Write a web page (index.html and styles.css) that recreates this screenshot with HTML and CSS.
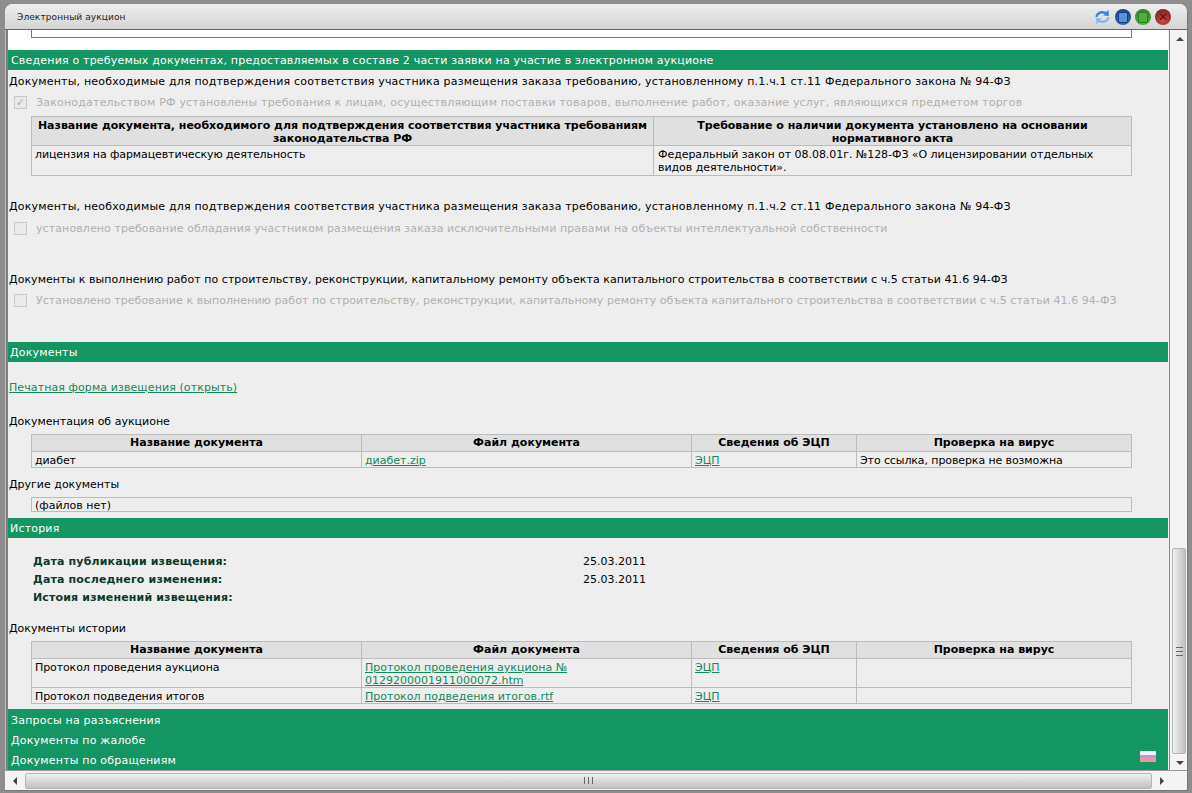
FILE: index.html
```html
<!DOCTYPE html>
<html lang="ru">
  <head>
    <meta charset="UTF-8" />
    <title>Электронный аукцион</title>
    <link rel="stylesheet" href="styles.css">
  </head>
  <body>
    <div class="window">
      <div class="titlebar">
        <span class="title">Электронный аукцион</span>
        <div class="win-buttons">
          <svg class="refresh" width="17" height="16" viewBox="0 0 17 16">
            <path d="M1.5 8 C1.5 3.5 7 0.5 12 3 L14.5 1 L15 7 L9 6.6 L11 5 C7.5 3.6 4.5 5 3.5 8 Z" fill="#3f86d6" />
            <path d="M15.5 8 C15.5 12.5 10 15.5 5 13 L2.5 15 L2 9 L8 9.4 L6 11 C9.5 12.4 12.5 11 13.5 8 Z" fill="#86b8ea" />
          </svg>
          <span class="round blue"><i></i></span>
          <span class="round green"><i></i></span>
          <span class="round red"><b>✕</b></span>
        </div>
      </div>
      <div class="middle">
        <div class="content">
          <div class="top-white">
            <div class="cut-box"></div>
          </div>
          <div class="bar">Сведения о требуемых документах, предоставляемых в составе 2 части заявки на участие в электронном аукционе</div>
          <div class="line l1">Документы, необходимые для подтверждения соответствия участника размещения заказа требованию, установленному п.1.ч.1 ст.11 Федерального закона № 94-ФЗ</div>
          <div class="check-row row1">
            <span class="check on">✓</span>
            <span>Законодательством РФ установлены требования к лицам, осуществляющим поставки товаров, выполнение работ, оказание услуг, являющихся предметом торгов</span>
          </div>
          <table class="grid lic">
            <tr>
              <th class="c-a">Название документа, необходимого для подтверждения соответствия участника требованиям законодательства РФ</th>
              <th>Требование о наличии документа установлено на основании нормативного акта</th>
            </tr>
            <tr class="tall">
              <td>лицензия на фармацевтическую деятельность</td>
              <td class="pad">Федеральный закон от 08.08.01г. №128-ФЗ «О лицензировании отдельных видов деятельности».</td>
            </tr>
          </table>
          <div class="line l2">Документы, необходимые для подтверждения соответствия участника размещения заказа требованию, установленному п.1.ч.2 ст.11 Федерального закона № 94-ФЗ</div>
          <div class="check-row row2">
            <span class="check"></span>
            <span>установлено требование обладания участником размещения заказа исключительными правами на объекты интеллектуальной собственности</span>
          </div>
          <div class="line l3">Документы к выполнению работ по строительству, реконструкции, капитальному ремонту объекта капитального строительства в соответствии с ч.5 статьи 41.6 94-ФЗ</div>
          <div class="check-row row3">
            <span class="check"></span>
            <span>Установлено требование к выполнению работ по строительству, реконструкции, капитальному ремонту объекта капитального строительства в соответствии с ч.5 статьи 41.6 94-ФЗ</span>
          </div>
          <div class="bar bar-docs">Документы</div>
          <div class="line print"><a href="#">Печатная форма извещения (открыть)</a></div>
          <div class="line l4">Документация об аукционе</div>
          <table class="grid docs">
            <tr>
              <th class="c1">Название документа</th>
              <th class="c2">Файл документа</th>
              <th class="c3">Сведения об ЭЦП</th>
              <th>Проверка на вирус</th>
            </tr>
            <tr>
              <td>диабет</td>
              <td><a href="#">диабет.zip</a></td>
              <td><a href="#">ЭЦП</a></td>
              <td>Это ссылка, проверка не возможна</td>
            </tr>
          </table>
          <div class="line l5">Другие документы</div>
          <div class="no-files">(файлов нет)</div>
          <div class="bar bar-hist">История</div>
          <div class="dates">
            <b>Дата публикации извещения:</b><span>25.03.2011</span>
            <b>Дата последнего изменения:</b><span>25.03.2011</span>
            <b>Истоия изменений извещения:</b><span></span>
          </div>
          <div class="line l6">Документы истории</div>
          <table class="grid docs">
            <tr>
              <th class="c1">Название документа</th>
              <th class="c2">Файл документа</th>
              <th class="c3">Сведения об ЭЦП</th>
              <th>Проверка на вирус</th>
            </tr>
            <tr>
              <td>Протокол проведения аукциона</td>
              <td><a href="#">Протокол проведения аукциона № 0129200001911000072.htm</a></td>
              <td><a href="#">ЭЦП</a></td>
              <td></td>
            </tr>
            <tr>
              <td>Протокол подведения итогов</td>
              <td><a href="#">Протокол подведения итогов.rtf</a></td>
              <td><a href="#">ЭЦП</a></td>
              <td></td>
            </tr>
          </table>
          <div class="bottom-bar">
            <div>Запросы на разъяснения</div>
            <div>Документы по жалобе</div>
            <div class="last-row">
              <span>Документы по обращениям</span>
              <span class="flag"></span>
            </div>
          </div>
        </div>
        <div class="vscroll">
          <div class="arrow up"></div>
          <div class="v-track"></div>
          <div class="v-thumb"><span class="grip"></span></div>
          <div class="arrow down"></div>
        </div>
      </div>
      <div class="hscroll">
        <div class="arrow left"></div>
        <div class="h-thumb"><span class="grip-h"></span></div>
        <div class="arrow right"></div>
      </div>
    </div>
  </body>
</html>
```

FILE: styles.css
```css
html,
body {
  margin: 0;
  height: 793px;
  overflow: hidden;
}
body {
  background-color: #8e8e8e;
  font-family: "DejaVu Sans", sans-serif;
  font-size: 11px;
  line-height: 13px;
  color: #000;
  padding: 4px 4px 3px 5px;
  box-sizing: border-box;
}
a {
  color: #128a5c;
  text-decoration: underline;
}
.window {
  height: 786px;
  display: flex;
  flex-direction: column;
  background-color: #f0f0f0;
  border-radius: 8px 8px 0 0;
  border-right: 1px solid #777;
  border-bottom: 1px solid #777;
}
.titlebar {
  height: 26px;
  flex: none;
  display: flex;
  align-items: center;
  justify-content: space-between;
  padding: 1px 16px 0 12px;
  background: linear-gradient(#eeeeee, #d4d4d4);
  border-bottom: 1px solid #666;
  box-sizing: border-box;
  border-radius: 8px 8px 0 0;
}
.title {
  font-size: 9px;
  letter-spacing: 0.1px;
  color: #222;
}
.win-buttons {
  display: flex;
  align-items: center;
  gap: 4px;
}
.round {
  width: 16px;
  height: 16px;
  border-radius: 50%;
  display: flex;
  align-items: center;
  justify-content: center;
}
.round i {
  width: 8px;
  height: 9px;
  border-radius: 2px;
}
.blue {
  background: radial-gradient(circle at 50% 70%, #3f7fd0, #0f3274);
}
.blue i {
  background-color: #5f92d2;
  border: 1px solid #163c84;
}
.green {
  background: radial-gradient(circle at 50% 70%, #62c848, #1c7418);
}
.green i {
  background-color: #4fb03c;
  border: 1px solid #267c20;
}
.red {
  background: radial-gradient(circle at 50% 70%, #c84c4c, #741616);
}
.red b {
  font-size: 12px;
  line-height: 12px;
  color: #5c1010;
}
.middle {
  flex: 1;
  min-height: 0;
  display: flex;
  border-left: 1px solid #bbb;
}
.content {
  width: 1160px;
  flex: none;
  background-color: #eeeeee;
  border-left: 2px solid #808080;
  overflow: hidden;
}
.top-white {
  height: 20px;
  background-color: #fff;
  padding-left: 23px;
}
.cut-box {
  width: 1099px;
  height: 7px;
  border: 1px solid #777;
  border-top: 0;
  background-color: #fff;
}
.bar {
  height: 20px;
  line-height: 22px;
  background-color: #149564;
  color: #fff;
  padding-left: 3px;
  letter-spacing: 0.19px;
}
.bar-docs,
.bar-hist {
  padding-left: 2px;
}
.bar-docs {
  margin-top: 35px;
}
.line {
  padding-left: 1px;
  height: 13px;
  line-height: 15px;
}
.l1,
.l2 {
  letter-spacing: 0.19px;
}
.l1 {
  margin-top: 4px;
}
.l2 {
  margin-top: 23px;
}
.l3 {
  margin-top: 37px;
  letter-spacing: 0.05px;
}
.print {
  margin-top: 18px;
  letter-spacing: 0.09px;
}
.l4 {
  margin-top: 21px;
}
.l5 {
  margin-top: 9px;
}
.l6 {
  margin-top: 14px;
}
.check-row {
  display: flex;
  align-items: center;
  height: 14px;
  margin-top: 8px;
  padding-left: 6px;
  color: #b0b0b0;
}
.row1 {
  letter-spacing: 0.2px;
}
.row2 {
  margin-top: 9px;
  letter-spacing: 0.1px;
}
.row3 {
  letter-spacing: 0.06px;
}
.check {
  width: 11px;
  height: 11px;
  margin-right: 9px;
  border: 1px solid #c8c8c8;
  background-color: #eaeaea;
  font-size: 11px;
  line-height: 11px;
  text-align: center;
  color: #b0b0b0;
  flex: none;
}
.grid {
  width: 1101px;
  margin-left: 23px;
  border-collapse: collapse;
  table-layout: fixed;
  line-height: 13px;
}
.grid th,
.grid td {
  border: 1px solid #bcbcbc;
  padding: 2px 3px 0;
  vertical-align: top;
}
.grid td {
  letter-spacing: -0.1px;
}
.grid td a {
  letter-spacing: 0;
}
.grid th {
  background-color: #e0e0e0;
  font-weight: bold;
  text-align: center;
}
.docs th {
  line-height: 14px;
  padding: 1px 3px;
}
.lic {
  margin-top: 7px;
}
.c-a {
  width: 615px;
}
.tall td {
  height: 27px;
}
.grid .pad {
  padding-left: 4px;
  letter-spacing: -0.05px;
}
.docs {
  margin-top: 7px;
}
.c1,
.c2 {
  width: 323px;
}
.c3 {
  width: 158px;
}
.no-files {
  width: 1093px;
  height: 13px;
  margin: 7px 0 0 23px;
  padding: 0 3px;
  line-height: 15px;
  border: 1px solid #bcbcbc;
}
.bar-hist {
  margin-top: 6px;
}
.dates {
  display: grid;
  grid-template-columns: 550px 1fr;
  grid-auto-rows: 18px;
  margin-top: 15px;
  padding-left: 25px;
  line-height: 18px;
  color: #0c3a28;
  height: 54px;
}
.dates b {
  letter-spacing: 0.15px;
}
.dates span {
  color: #000;
}
.bottom-bar {
  margin-top: 5px;
  padding: 2px 12px 0 3px;
  background-color: #149564;
  color: #fff;
  height: 59px;
  letter-spacing: 0.2px;
}
.bottom-bar div {
  height: 20px;
  line-height: 20px;
}
.last-row {
  display: flex;
  justify-content: space-between;
  align-items: center;
}
.flag {
  width: 16px;
  height: 11px;
  margin-bottom: 10px;
  background: linear-gradient(#f4f4f8 0 33%, #b49ae8 33% 66%, #e89a9a 66%);
}
.vscroll {
  position: relative;
  width: 18px;
  margin-left: 1px;
  border-left: 1px solid #888;
  display: flex;
  flex-direction: column;
  background-color: #f4f4f4;
}
.v-track {
  flex: 1;
}
.v-thumb {
  position: absolute;
  left: 2px;
  right: 1px;
  top: 518px;
  height: 206px;
  border: 1px solid #b4b4b4;
  border-radius: 2px;
  box-sizing: border-box;
  background: linear-gradient(90deg, #f0f0f0, #c0c0c0);
  display: flex;
  align-items: center;
  justify-content: center;
}
.grip {
  width: 7px;
  height: 7px;
  border-top: 1px solid #666;
  border-bottom: 1px solid #666;
  background: linear-gradient(#666, #666) center / 100% 1px no-repeat;
}
.arrow {
  flex: none;
  width: 17px;
  height: 17px;
  position: relative;
}
.arrow::after {
  content: "";
  position: absolute;
  left: 5px;
  top: 5px;
  border: 4px solid transparent;
}
.up::after {
  left: 6px;
  top: 3px;
  border-bottom-color: #444;
}
.down::after {
  left: 6px;
  top: 8px;
  border-top-color: #444;
}
.left::after {
  left: 1px;
  border-right-color: #444;
}
.right::after {
  left: 8px;
  border-left-color: #444;
}
.hscroll {
  height: 20px;
  flex: none;
  box-sizing: border-box;
  display: flex;
  align-items: center;
  padding: 0 18px 0 3px;
  background-color: #f4f4f4;
  border-top: 1px solid #999;
}
.h-thumb {
  flex: 1;
  height: 16px;
  border: 1px solid #b4b4b4;
  border-radius: 2px;
  box-sizing: border-box;
  background: linear-gradient(#f0f0f0, #c0c0c0);
  display: flex;
  align-items: center;
  justify-content: center;
}
.grip-h {
  width: 7px;
  height: 7px;
  border-left: 1px solid #666;
  border-right: 1px solid #666;
  background: linear-gradient(#666, #666) center / 1px 100% no-repeat;
}
```
